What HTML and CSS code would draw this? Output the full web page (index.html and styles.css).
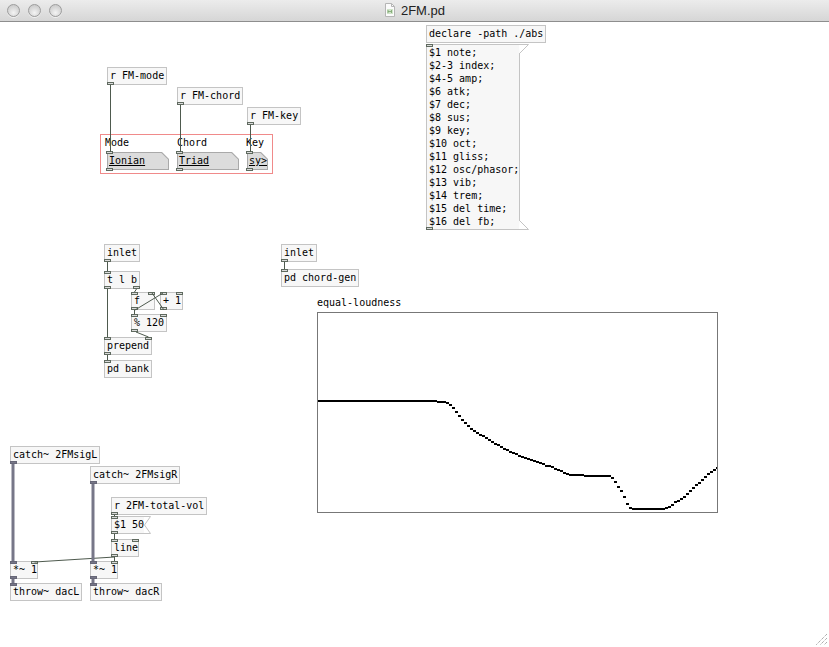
FILE: index.html
```
<!DOCTYPE html>
<html>
<head>
<meta charset="utf-8">
<title>2FM.pd</title>
<link rel="stylesheet" href="styles.css">
</head>
<body>
<div class="window">
  <header class="titlebar">
    <div class="lights"><span class="light"></span><span class="light"></span><span class="light"></span></div>
    <div class="title">
      <svg class="docicon" width="10" height="14" viewBox="0 0 10 14"><path d="M0.5 0.5 H6.5 L9.5 3.5 V13.5 H0.5 Z" fill="#fbfbfb" stroke="#b5b5b5"/><path d="M6.5 0.5 V3.5 H9.5" fill="none" stroke="#b5b5b5"/><rect x="2" y="6" width="6" height="5" fill="#cfe3c8"/><path d="M3 7 V10 M3 8.5 H6.5 M6.5 7 V10" stroke="#7aa36c" stroke-width="0.8" fill="none"/></svg>
      <span class="title-text">2FM.pd</span>
    </div>
  </header>
  <main class="canvas">
    <div class="node n-rmode">r FM-mode<i class="io out l"></i></div>
    <div class="node n-rchord">r FM-chord<i class="io out l"></i></div>
    <div class="node n-rkey">r FM-key<i class="io out l"></i></div>

    <div class="gop"></div>
    <div class="lbl l-mode">Mode</div>
    <div class="lbl l-chord">Chord</div>
    <div class="lbl l-key">Key</div>
    <div class="dd d-ionian"><div class="dd-face"><span>Ionian</span></div><i class="io in l"></i><i class="io out l"></i></div>
    <div class="dd d-triad"><div class="dd-face"><span>Triad</span></div><i class="io in l"></i><i class="io out l"></i></div>
    <div class="dd d-sy"><div class="dd-face"><span>sy&gt;</span></div><i class="io in l"></i><i class="io out l"></i></div>

    <div class="node n-decl">declare -path ./abs</div>
    <div class="node msg msg-tall n-msg">$1 note;
$2-3 index;
$4-5 amp;
$6 atk;
$7 dec;
$8 sus;
$9 key;
$10 oct;
$11 gliss;
$12 osc/phasor;
$13 vib;
$14 trem;
$15 del time;
$16 del fb;<i class="io in l"></i><i class="io out l"></i><svg class="flag ft" width="10" height="10"><polyline points="0,0.5 9.5,0.5 0.5,9.5"/></svg><svg class="flag fb" width="10" height="10"><polyline points="0,9.5 9.5,9.5 0.5,0.5"/></svg></div>

    <div class="node n-inl">inlet<i class="io out l"></i></div>
    <div class="node n-tlb">t l b<i class="io in l"></i><i class="io out l"></i><i class="io out r"></i></div>
    <div class="node n-f">f<i class="io in l"></i><i class="io in r"></i><i class="io out l"></i></div>
    <div class="node n-plus">+ 1<i class="io in l"></i><i class="io in r"></i><i class="io out l"></i></div>
    <div class="node n-mod">% 120<i class="io in l"></i><i class="io in r"></i><i class="io out l"></i></div>
    <div class="node n-prepend">prepend<i class="io in l"></i><i class="io in r"></i><i class="io out l"></i></div>
    <div class="node n-pdbank">pd bank<i class="io in l"></i></div>

    <div class="node n-inr">inlet<i class="io out l"></i></div>
    <div class="node n-chordgen">pd chord-gen<i class="io in l"></i></div>

    <div class="lbl l-eq">equal-loudness</div>
    <div class="graph"></div>

    <div class="node n-catchl">catch~ 2FMsigL<i class="io sig out l"></i></div>
    <div class="node n-catchr">catch~ 2FMsigR<i class="io sig out l"></i></div>
    <div class="node n-rvol">r 2FM-total-vol<i class="io out l"></i></div>
    <div class="node msg msg-short n-msg50">$1 50<i class="io in l"></i><i class="io out l"></i><svg class="flag fs" width="7" height="18"><polyline points="0,0.5 6.5,0.5 0.5,9 6.5,17.5 0,17.5"/></svg></div>
    <div class="node n-line">line<i class="io in l"></i><i class="io in r"></i><i class="io out l"></i></div>
    <div class="node n-mull">*~ 1<i class="io sig in l"></i><i class="io in r"></i><i class="io sig out l"></i></div>
    <div class="node n-mulr">*~ 1<i class="io sig in l"></i><i class="io in r"></i><i class="io sig out l"></i></div>
    <div class="node n-throwl">throw~ dacL<i class="io sig in l"></i></div>
    <div class="node n-throwr">throw~ dacR<i class="io sig in l"></i></div>

    <svg class="wires" width="829" height="625" viewBox="0 22 829 625">
      <g class="ctl">
        <line x1="110.5" y1="85" x2="110.5" y2="152"/>
        <line x1="180.5" y1="105" x2="180.5" y2="152"/>
        <line x1="250.5" y1="125" x2="250.5" y2="152"/>
        <line x1="107.5" y1="262" x2="107.5" y2="271"/>
        <line x1="107.5" y1="289" x2="107.5" y2="337"/>
        <line x1="136.5" y1="289" x2="134.5" y2="292"/>
        <line x1="134.5" y1="310" x2="134.5" y2="314"/>
        <line x1="135" y1="310" x2="163" y2="293"/>
        <line x1="164" y1="310" x2="152" y2="293"/>
        <line x1="136" y1="332" x2="148.5" y2="337"/>
        <line x1="107.5" y1="355" x2="107.5" y2="360"/>
        <line x1="284.5" y1="262" x2="284.5" y2="269"/>
        <line x1="114.5" y1="515" x2="114.5" y2="516"/>
        <line x1="114.5" y1="534" x2="114.5" y2="539"/>
        <line x1="114.5" y1="557" x2="34.5" y2="562"/>
        <line x1="114.5" y1="557" x2="114.5" y2="561"/>
      </g>
      <g class="sig">
        <line x1="13" y1="464" x2="13" y2="561"/>
        <line x1="93" y1="484" x2="93" y2="561"/>
        <line x1="13" y1="579" x2="13" y2="583"/>
        <line x1="93" y1="579" x2="93" y2="583"/>
      </g>
      <path class="curve" d="M318 401H437 M437 402H446 M446 403h3 M449 405h3 M452 408h3 M455 412h3 M458 416h3 M461 420h3 M464 423h3 M467 426h3 M470 429h3 M473 431h3 M476 433h3 M479 435h3 M482 436h3 M485 438h3 M488 440h3 M491 442h3 M494 444h3 M497 445h3 M500 447h3 M503 449h3 M506 450h3 M509 452h3 M512 453h3 M515 454h3 M518 456h3 M521 457h3 M524 458h3 M527 459h3 M530 460h3 M533 461h3 M536 462h3 M539 463h3 M542 464h3 M545 466h6 M551 467h3 M554 469h3 M557 470h3 M560 471h3 M563 473h3 M566 474h3 M569 475H584 M584 476H611 M611 478h3 M614 482h3 M617 487h3 M620 491h3 M623 497h3 M626 504h3 M629 508h3 M632 509H665 M665 508h3 M668 507h3 M671 505h3 M674 502h3 M677 501h3 M680 499h3 M683 497h3 M686 494h3 M689 491h3 M692 488h3 M695 485h3 M698 483h3 M701 480h3 M704 477h3 M707 474h3 M710 472h3 M713 470h3 M716 468h1"/>
    </svg>

    <svg class="grip" width="14" height="14" viewBox="0 0 14 14">
      <path d="M13 2 L2 13 M13 6 L6 13 M13 10 L10 13" stroke="#8a8a8a" stroke-width="1" stroke-dasharray="1 1"/>
    </svg>
  </main>
</div>
</body>
</html>
```
FILE: styles.css
```
html, body {
  margin: 0;
  padding: 0;
  background: #fff;
}
body {
  width: 829px;
  height: 647px;
  overflow: hidden;
  font-family: "DejaVu Sans Mono", "Liberation Mono", monospace;
}
.window {
  width: 829px;
  height: 647px;
  display: flex;
  flex-direction: column;
}
.titlebar {
  position: relative;
  height: 21px;
  flex: none;
  border-bottom: 1px solid #8e8e8e;
  background: linear-gradient(#ececec, #d6d6d6);
  display: flex;
  align-items: center;
}
.lights {
  display: flex;
  gap: 8px;
  padding-left: 7px;
  position: relative;
  z-index: 1;
}
.light {
  width: 11px;
  height: 11px;
  border-radius: 50%;
  border: 1px solid #9c9c9c;
  background: radial-gradient(circle at 50% 70%, #f4f4f4 0, #dcdcdc 45%, #c2c2c2 100%);
  box-shadow: 0 1px 0 rgba(255,255,255,0.6);
}
.title {
  position: absolute;
  left: 0;
  right: 0;
  top: 0;
  height: 21px;
  display: flex;
  justify-content: center;
  align-items: center;
  gap: 6px;
  padding-left: 1px;
  font-family: "Liberation Sans", Arial, sans-serif;
  font-size: 13px;
  color: #222;
}
.docicon {
  display: block;
  margin-top: -1px;
}
.canvas {
  position: relative;
  flex: 1;
  background: #fff;
}
.node {
  position: absolute;
  height: 16px;
  border: 1px solid #c4c4c4;
  background: #f7f7f7;
  padding: 0 2px;
  font-size: 10px;
  line-height: 16px;
  color: #000;
  white-space: pre;
}
.io {
  position: absolute;
  width: 7px;
  height: 3px;
  box-sizing: border-box;
  border: 1px solid #5f6a5f;
  background: #dadada;
}
.io.in { top: -1px; }
.io.out { bottom: -1px; }
.io.l { left: -1px; }
.io.r { right: -1px; }
.io.sig {
  background: #777788;
  border-color: #666677;
}
.msg {
  border-right: 0;
  padding-right: 1px;
}
.msg-tall {
  line-height: 13px;
  height: auto;
  padding-top: 1px;
  padding-bottom: 1px;
}
.msg-tall::after {
  content: "";
  position: absolute;
  right: 0;
  top: 8px;
  bottom: 8px;
  width: 1px;
  background: #c4c4c4;
}
.flag {
  position: absolute;
  overflow: visible;
}
.flag polyline {
  fill: #fff;
  stroke: #c4c4c4;
  stroke-width: 1;
}
.flag.ft { top: -1px; right: -9px; }
.flag.fb { bottom: -1px; right: -9px; }
.flag.fs { top: -1px; right: -6px; }

.gop {
  position: absolute;
  left: 100px;
  top: 112px;
  width: 173px;
  height: 40px;
  box-sizing: border-box;
  border: 1px solid #f08a8a;
}
.lbl {
  position: absolute;
  font-size: 10px;
  line-height: 16px;
  color: #000;
  white-space: pre;
}
.l-mode { left: 105px; top: 113px; }
.l-chord { left: 177px; top: 113px; }
.l-key { left: 246px; top: 113px; }
.l-eq { left: 317px; top: 273px; }

.dd {
  position: absolute;
  height: 18px;
}
.dd-face {
  height: 18px;
  box-sizing: border-box;
  padding: 1px;
  background: #a9a9a9;
  clip-path: polygon(0 0, calc(100% - 7px) 0, 100% 7px, 100% 100%, 0 100%);
}
.dd-face span {
  display: block;
  height: 16px;
  padding-left: 1px;
  background: #dcdcdc;
  clip-path: polygon(0 0, calc(100% - 6.6px) 0, 100% 6.6px, 100% 100%, 0 100%);
  font-size: 10px;
  line-height: 16px;
  text-decoration: underline;
  text-underline-offset: 1px;
  white-space: pre;
}
.d-ionian { left: 107px; top: 130px; width: 62px; }
.d-triad { left: 177px; top: 130px; width: 62px; }
.d-sy { left: 247px; top: 130px; width: 21px; }

.n-rmode { left: 107px; top: 45px; }
.n-rchord { left: 177px; top: 65px; }
.n-rkey { left: 247px; top: 85px; }
.n-decl { left: 426px; top: 3px; }
.n-msg { left: 426px; top: 22px; }
.n-inl { left: 104px; top: 222px; }
.n-tlb { left: 104px; top: 249px; }
.n-f { left: 131px; top: 270px; width: 18px; }
.n-plus { left: 160px; top: 270px; width: 17px; }
.n-mod { left: 131px; top: 292px; }
.n-prepend { left: 104px; top: 315px; }
.n-pdbank { left: 104px; top: 338px; }
.n-inr { left: 281px; top: 222px; }
.n-chordgen { left: 281px; top: 247px; }
.n-catchl { left: 10px; top: 424px; }
.n-catchr { left: 90px; top: 444px; }
.n-rvol { left: 111px; top: 475px; }
.n-msg50 { left: 111px; top: 494px; }
.n-line { left: 111px; top: 517px; width: 22px; }
.n-mull { left: 10px; top: 539px; width: 22px; }
.n-mulr { left: 90px; top: 539px; width: 22px; }
.n-throwl { left: 10px; top: 561px; }
.n-throwr { left: 90px; top: 561px; }

.graph {
  position: absolute;
  left: 317px;
  top: 290px;
  width: 401px;
  height: 201px;
  box-sizing: border-box;
  border: 1px solid #777;
  background: #fff;
}
.wires {
  position: absolute;
  left: 0;
  top: 0;
  pointer-events: none;
}
.wires .ctl line {
  stroke: #4e5a4e;
  stroke-width: 1;
}
.wires .sig line {
  stroke: #777788;
  stroke-width: 3;
}
.curve {
  fill: none;
  stroke: #000;
  stroke-width: 2;
  shape-rendering: crispEdges;
}
.grip {
  position: absolute;
  right: 1px;
  bottom: 1px;
}
```
